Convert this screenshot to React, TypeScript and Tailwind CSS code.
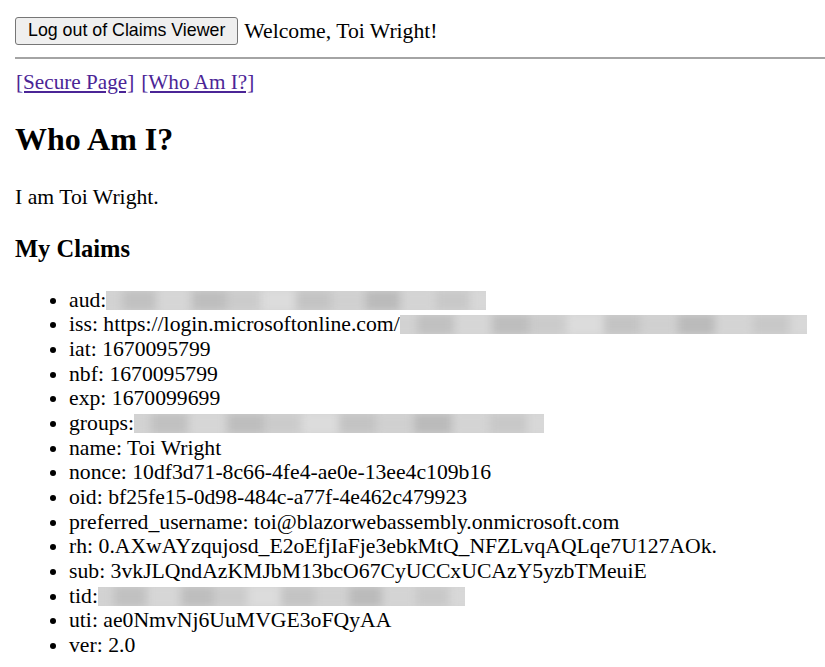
import React from 'react';

type Claim = { key: string; value?: string; blur?: number };

const CLAIMS: Claim[] = [
  { key: 'aud', blur: 380 },
  { key: 'iss', value: 'https://login.microsoftonline.com/', blur: 407 },
  { key: 'iat', value: '1670095799' },
  { key: 'nbf', value: '1670095799' },
  { key: 'exp', value: '1670099699' },
  { key: 'groups', blur: 410 },
  { key: 'name', value: 'Toi Wright' },
  { key: 'nonce', value: '10df3d71-8c66-4fe4-ae0e-13ee4c109b16' },
  { key: 'oid', value: 'bf25fe15-0d98-484c-a77f-4e462c479923' },
  { key: 'preferred_username', value: 'toi@blazorwebassembly.onmicrosoft.com' },
  { key: 'rh', value: '0.AXwAYzqujosd_E2oEfjIaFje3ebkMtQ_NFZLvqAQLqe7U127AOk.' },
  { key: 'sub', value: '3vkJLQndAzKMJbM13bcO67CyUCCxUCAzY5yzbTMeuiE' },
  { key: 'tid', blur: 367 },
  { key: 'uti', value: 'ae0NmvNj6UuMVGE3oFQyAA' },
  { key: 'ver', value: '2.0' },
];

// redacted value: light grey smudge with darker patches
function Redacted({ width }: { width: number }) {
  const shades = ['#d2d2d2', '#c0c0c0', '#d6d6d6', '#bdbdbd', '#cbcbcb', '#dcdcdc', '#c3c3c3', '#d0d0d0', '#bababa', '#d4d4d4', '#c8c8c8', '#d8d8d8'];
  return (
    <span
      className="inline-flex h-[19px] align-[-3px] overflow-hidden bg-[#d4d4d4]"
      style={{ width }}
    >
      <span className="flex w-full h-full blur-[4px] scale-110">
        {shades.map((c, i) => (
          <span key={i} className="flex-1 h-full" style={{ backgroundColor: c }} />
        ))}
      </span>
    </span>
  );
}

export default function App() {
  return (
    <div className="bg-white text-black min-h-screen font-['Liberation_Serif','Times_New_Roman',serif] text-[21.7px] leading-[24.65px] pb-4">
      <div className="pl-[15px] pt-[17px] flex items-center gap-[6px]">
        <button className="h-[28px] px-[12px] bg-[#efefef] border border-[#767676] rounded-[3px] font-['Liberation_Sans',Arial,sans-serif] text-[17.8px] leading-none text-black">
          Log out of Claims Viewer
        </button>
        <span>Welcome, Toi Wright!</span>
      </div>

      <div className="ml-[15px] mt-[12px] h-[2px] bg-[#a4a4a4]" />

      <div className="pl-[16px] mt-[11px] flex gap-[7px] text-[21.2px] text-[#4b2596]">
        <a className="underline" href="#">[Secure Page]</a>
        <a className="underline" href="#">[Who Am I?]</a>
      </div>

      <div className="pl-[15px]">
        <h1 className="mt-[26px] text-[32px] leading-[37px] font-bold">Who Am I?</h1>
        <p className="mt-[27px]">I am Toi Wright.</p>
        <h3 className="mt-[26px] text-[24.5px] leading-[28.5px] font-bold">My Claims</h3>
        <ul className="mt-[24px] list-disc pl-[54px]">
          {CLAIMS.map((c) => (
            <li key={c.key}>
              {c.key}:{c.value ? ` ${c.value}` : ''}
              {c.blur ? <Redacted width={c.blur} /> : null}
            </li>
          ))}
        </ul>
      </div>
    </div>
  );
}
